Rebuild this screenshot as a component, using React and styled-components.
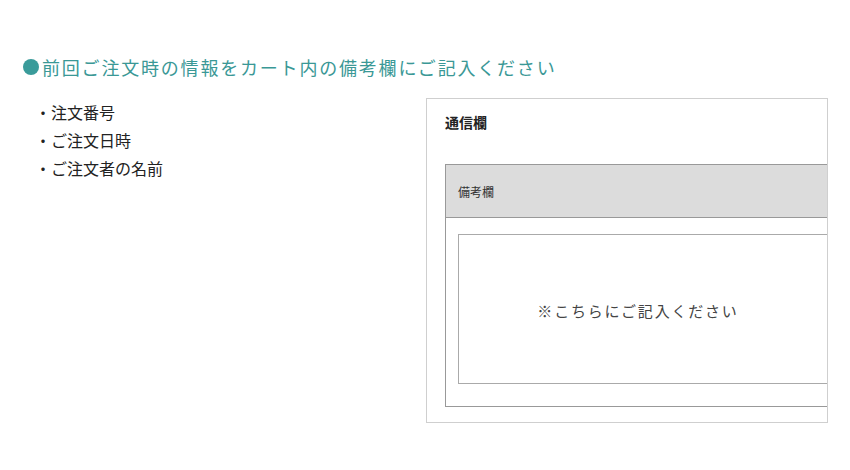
import React from 'react'
import styled, { createGlobalStyle } from 'styled-components'

const GlobalStyle = createGlobalStyle`
    body {
        margin: 0;
        background: #fff;
        font-family: "Noto Sans CJK JP", "Noto Sans", sans-serif;
        color: #222;
    }
`

const items = ['注文番号', 'ご注文日時', 'ご注文者の名前']

function App() {
  return (
    <Page>
      <GlobalStyle />
      <Heading>
        <Dot />
        前回ご注文時の情報をカート内の備考欄にご記入ください
      </Heading>
      <Row>
        <List>
          {items.map((item) => (
            <li key={item}>・{item}</li>
          ))}
        </List>
        <Panel>
          <PanelTitle>通信欄</PanelTitle>
          <NoteBox>
            <NoteHead>備考欄</NoteHead>
            <NoteBody>
              <NoteArea placeholder="※こちらにご記入ください" />
            </NoteBody>
          </NoteBox>
        </Panel>
      </Row>
    </Page>
  )
}

const Page = styled.div`
    padding: 54px 0 0 23px;
`

const Heading = styled.h2`
    margin: 0;
    display: flex;
    align-items: center;
    font-size: 18px;
    line-height: 26px;
    font-weight: 400;
    letter-spacing: 1.8px;
    color: #3a9896;
`

const Dot = styled.span`
    width: 16px;
    height: 16px;
    border-radius: 50%;
    background: #3a9b9a;
    margin-right: 3px;
    flex-shrink: 0;
`

const Row = styled.div`
    display: flex;
    margin-top: 18px;
`

const List = styled.ul`
    list-style: none;
    margin: 0;
    padding: 0 0 0 12px;
    width: 391px;

    li {
        font-size: 16px;
        line-height: 28px;
        color: #222;
    }
`

const Panel = styled.div`
    box-sizing: border-box;
    width: 402px;
    border: 1px solid #cfcfcf;
    padding: 13px 0 15px 18px;
    overflow: hidden;
`

const PanelTitle = styled.div`
    font-size: 14px;
    line-height: 20px;
    font-weight: 700;
    color: #222;
`

const NoteBox = styled.div`
    width: 500px;
    margin-top: 32px;
    border: 1px solid #999;
`

const NoteHead = styled.div`
    height: 52px;
    display: flex;
    align-items: center;
    padding-left: 12px;
    background: #dcdcdc;
    border-bottom: 1px solid #999;
    font-size: 12px;
    color: #333;
`

const NoteBody = styled.div`
    padding: 16px 0 22px 12px;
`

const NoteArea = styled.textarea`
    display: block;
    box-sizing: border-box;
    width: 440px;
    height: 150px;
    margin: 0;
    border: 1px solid #aaa;
    padding: 65px 80px 0 0;
    resize: none;
    outline: none;
    font-family: "Noto Sans CJK JP", "Noto Sans", sans-serif;
    font-size: 15px;
    line-height: 22px;
    letter-spacing: 1.8px;
    text-align: center;

    &::placeholder {
        color: #444;
        opacity: 1;
    }
`

export default App
